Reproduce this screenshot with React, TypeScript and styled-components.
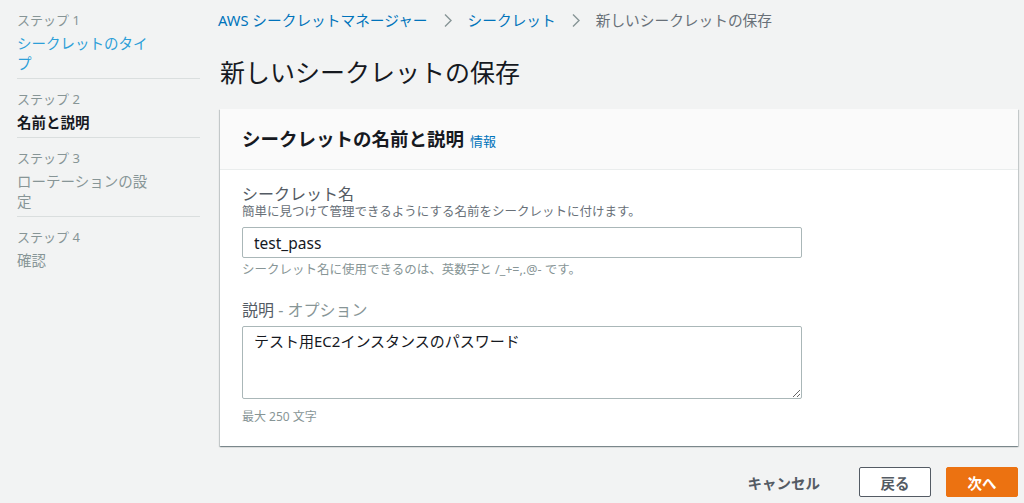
import React from "react";
import styled, { createGlobalStyle } from "styled-components";

const GlobalStyle = createGlobalStyle`
  * {
    box-sizing: border-box;
  }
  body {
    margin: 0;
    background: #f2f3f3;
    font-family: "Noto Sans", "Noto Sans CJK JP", sans-serif;
    color: #16191f;
  }
`;

const Page = styled.div`
  display: grid;
  grid-template-columns: 183px 1fr;
  column-gap: 20px;
  min-height: 503px;
  padding: 0 6px 0 17px;
`;

const Sidebar = styled.nav`
  display: flex;
  flex-direction: column;
`;

const Step = styled.div<{ last?: boolean }>`
  padding: 10px 0 5px;
  border-bottom: ${({ last }) => (last ? "none" : "1px solid #dadede")};
`;

const StepLabel = styled.div`
  font-size: 13px;
  line-height: 20px;
  color: #879596;
`;

const StepName = styled.div<{ state: "done" | "current" | "todo" }>`
  margin-top: 3px;
  max-width: 140px;
  font-size: 14.5px;
  line-height: 20px;
  color: ${({ state }) =>
    state === "done" ? "#2d9fd8" : state === "current" ? "#16191f" : "#879596"};
  font-weight: ${({ state }) => (state === "current" ? 700 : 400)};
`;

const Main = styled.main`
  display: flex;
  flex-direction: column;
  padding-top: 10px;
`;

const Breadcrumbs = styled.div`
  display: flex;
  align-items: center;
  gap: 15px;
  font-size: 14.7px;
  line-height: 20px;
  margin-left: -2px;
`;

const Crumb = styled.span<{ current?: boolean }>`
  color: ${({ current }) => (current ? "#687078" : "#0073bb")};
`;

const Chevron = styled.svg`
  width: 10px;
  height: 15px;
`;

const Title = styled.h1`
  margin: 24px 0 0;
  font-size: 25px;
  line-height: 36px;
  font-weight: 400;
  color: #16191f;
`;

const Card = styled.section`
  margin-top: 19px;
  background: #fff;
  box-shadow: 0 1px 1px 0 rgba(0, 28, 36, 0.3), 1px 1px 1px 0 rgba(0, 28, 36, 0.15),
    -1px 1px 1px 0 rgba(0, 28, 36, 0.15);
`;

const CardHeader = styled.header`
  display: flex;
  align-items: baseline;
  gap: 6px;
  padding: 18px 22px 18px;
  background: #fafafa;
  border-bottom: 1px solid #eaeded;
`;

const CardTitle = styled.h2`
  margin: 0;
  font-size: 18.5px;
  line-height: 24px;
  font-weight: 700;
`;

const InfoLink = styled.span`
  font-size: 13px;
  color: #0073bb;
`;

const CardBody = styled.div`
  display: flex;
  flex-direction: column;
  gap: 21px;
  padding: 14px 22px 20px;
`;

const Field = styled.div`
  display: flex;
  flex-direction: column;
`;

const Label = styled.div`
  font-size: 16px;
  line-height: 20px;
  color: #545b64;
`;

const Optional = styled.span`
  color: #879596;
`;

const Description = styled.div`
  font-size: 12.5px;
  line-height: 16px;
  color: #687078;
`;

const Hint = styled.div<{ gap: number }>`
  margin-top: ${({ gap }) => gap}px;
  font-size: 12.5px;
  line-height: 18px;
  color: #879596;
`;

const TextInput = styled.input`
  margin-top: 7px;
  width: 560px;
  height: 31px;
  padding: 0 11px;
  border: 1px solid #aab7b8;
  border-radius: 2px;
  font-family: inherit;
  font-size: 15.5px;
  color: #16191f;
  background: #fff;
`;

const TextArea = styled.textarea`
  margin-top: 6px;
  width: 560px;
  height: 73px;
  padding: 3px 11px;
  border: 1px solid #aab7b8;
  border-radius: 2px;
  font-family: inherit;
  font-size: 15px;
  line-height: 22px;
  color: #16191f;
  resize: vertical;
`;

const Counter = styled.div`
  margin-top: 9px;
  font-size: 12px;
  line-height: 18px;
  color: #879596;
`;

const Actions = styled.div`
  display: flex;
  justify-content: flex-end;
  align-items: center;
  gap: 15px;
  margin-top: 21px;
`;

const Button = styled.button<{ variant: "link" | "normal" | "primary" }>`
  height: 30px;
  padding: 0 20px;
  min-width: 72px;
  margin-right: ${({ variant }) => (variant === "link" ? "3px" : "0")};
  font-family: inherit;
  font-size: 14.5px;
  font-weight: 700;
  border-radius: 2px;
  cursor: pointer;
  border: 1px solid
    ${({ variant }) =>
      variant === "normal" ? "#545b64" : variant === "primary" ? "#ec7211" : "transparent"};
  background: ${({ variant }) =>
    variant === "primary" ? "#ec7211" : variant === "normal" ? "#fff" : "transparent"};
  color: ${({ variant }) => (variant === "primary" ? "#fff" : "#545b64")};
`;

const steps = [
  { label: "ステップ 1", name: "シークレットのタイプ", state: "done" as const },
  { label: "ステップ 2", name: "名前と説明", state: "current" as const },
  { label: "ステップ 3", name: "ローテーションの設定", state: "todo" as const },
  { label: "ステップ 4", name: "確認", state: "todo" as const },
];

const ChevronIcon = () => (
  <Chevron viewBox="0 0 10 15">
    <path d="M2 1.5l6 6-6 6" fill="none" stroke="#879596" strokeWidth="1.4" />
  </Chevron>
);

export default function App() {
  return (
    <>
      <GlobalStyle />
      <Page>
        <Sidebar>
          {steps.map((s, i) => (
            <Step key={s.label} last={i === steps.length - 1}>
              <StepLabel>{s.label}</StepLabel>
              <StepName state={s.state}>{s.name}</StepName>
            </Step>
          ))}
        </Sidebar>
        <Main>
          <Breadcrumbs>
            <Crumb>AWS シークレットマネージャー</Crumb>
            <ChevronIcon />
            <Crumb>シークレット</Crumb>
            <ChevronIcon />
            <Crumb current>新しいシークレットの保存</Crumb>
          </Breadcrumbs>
          <Title>新しいシークレットの保存</Title>
          <Card>
            <CardHeader>
              <CardTitle>シークレットの名前と説明</CardTitle>
              <InfoLink>情報</InfoLink>
            </CardHeader>
            <CardBody>
              <Field>
                <Label>シークレット名</Label>
                <Description>簡単に見つけて管理できるようにする名前をシークレットに付けます。</Description>
                <TextInput defaultValue="test_pass" />
                <Hint gap={3}>シークレット名に使用できるのは、英数字と /_+=,.@- です。</Hint>
              </Field>
              <Field>
                <Label>
                  説明 <Optional>- オプション</Optional>
                </Label>
                <TextArea defaultValue="テスト用EC2インスタンスのパスワード" />
                <Counter>最大 250 文字</Counter>
              </Field>
            </CardBody>
          </Card>
          <Actions>
            <Button variant="link">キャンセル</Button>
            <Button variant="normal">戻る</Button>
            <Button variant="primary">次へ</Button>
          </Actions>
        </Main>
      </Page>
    </>
  );
}
